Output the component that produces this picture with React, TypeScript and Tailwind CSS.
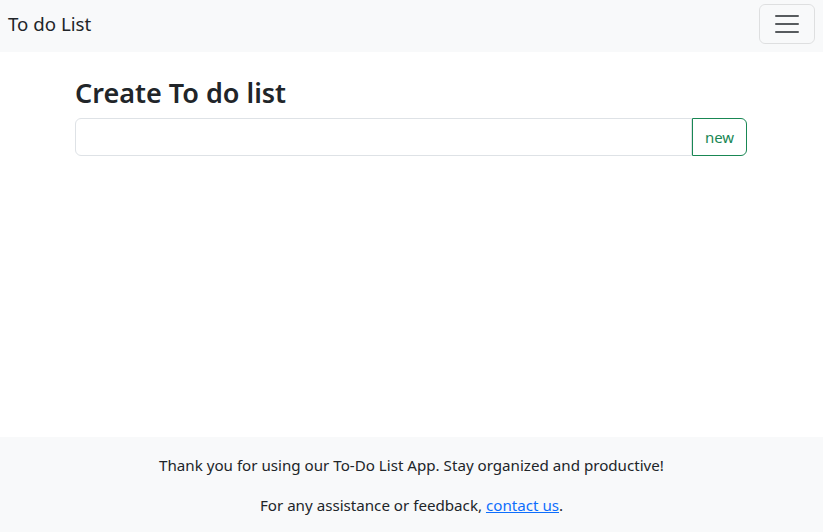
import React from "react";

export default function App() {
  return (
    <div
      className="min-h-screen flex flex-col bg-white text-[#212529]"
      style={{ fontFamily: '"Segoe UI", "Noto Sans", "Open Sans", sans-serif' }}
    >
      <nav className="h-[52px] bg-[#f8f9fa] flex items-start justify-between pt-1 pl-2 pr-2">
        <a className="text-[18.7px] leading-[30px] py-[5px] text-[#212529]">To do List</a>
        <button className="w-[56px] h-[40px] border border-[rgba(0,0,0,0.1)] rounded-[6px] flex items-center justify-center">
          <svg width="30" height="30" viewBox="0 0 30 30">
            <path
              d="M4 7h22M4 15h22M4 23h22"
              stroke="rgba(33,37,41,0.75)"
              strokeWidth="2"
              strokeLinecap="round"
              strokeMiterlimit="10"
            />
          </svg>
        </button>
      </nav>
      <main className="flex-1 pl-[75px] pr-[76px]">
        <div className="pt-[24px]">
          <h2 className="text-[27px] leading-[34px] font-semibold mb-2">Create To do list</h2>
          <div className="flex h-[38px]">
            <input className="flex-1 min-w-0 border border-[#dee2e6] rounded-l-[6px] px-3 outline-none" />
            <button className="w-[55px] border border-[#198754] text-[#198754] rounded-r-[6px] text-[15px]">
              new
            </button>
          </div>
        </div>
      </main>
      <footer className="bg-[#f8f9fa] text-center pt-4 pb-[15px] flex flex-col gap-4 text-[15.15px] leading-[24px]">
        <p>Thank you for using our To-Do List App. Stay organized and productive!</p>
        <p>
          For any assistance or feedback,{" "}
          <a href="#" className="text-[#0d6efd] underline">
            contact us
          </a>
          .
        </p>
      </footer>
    </div>
  );
}
